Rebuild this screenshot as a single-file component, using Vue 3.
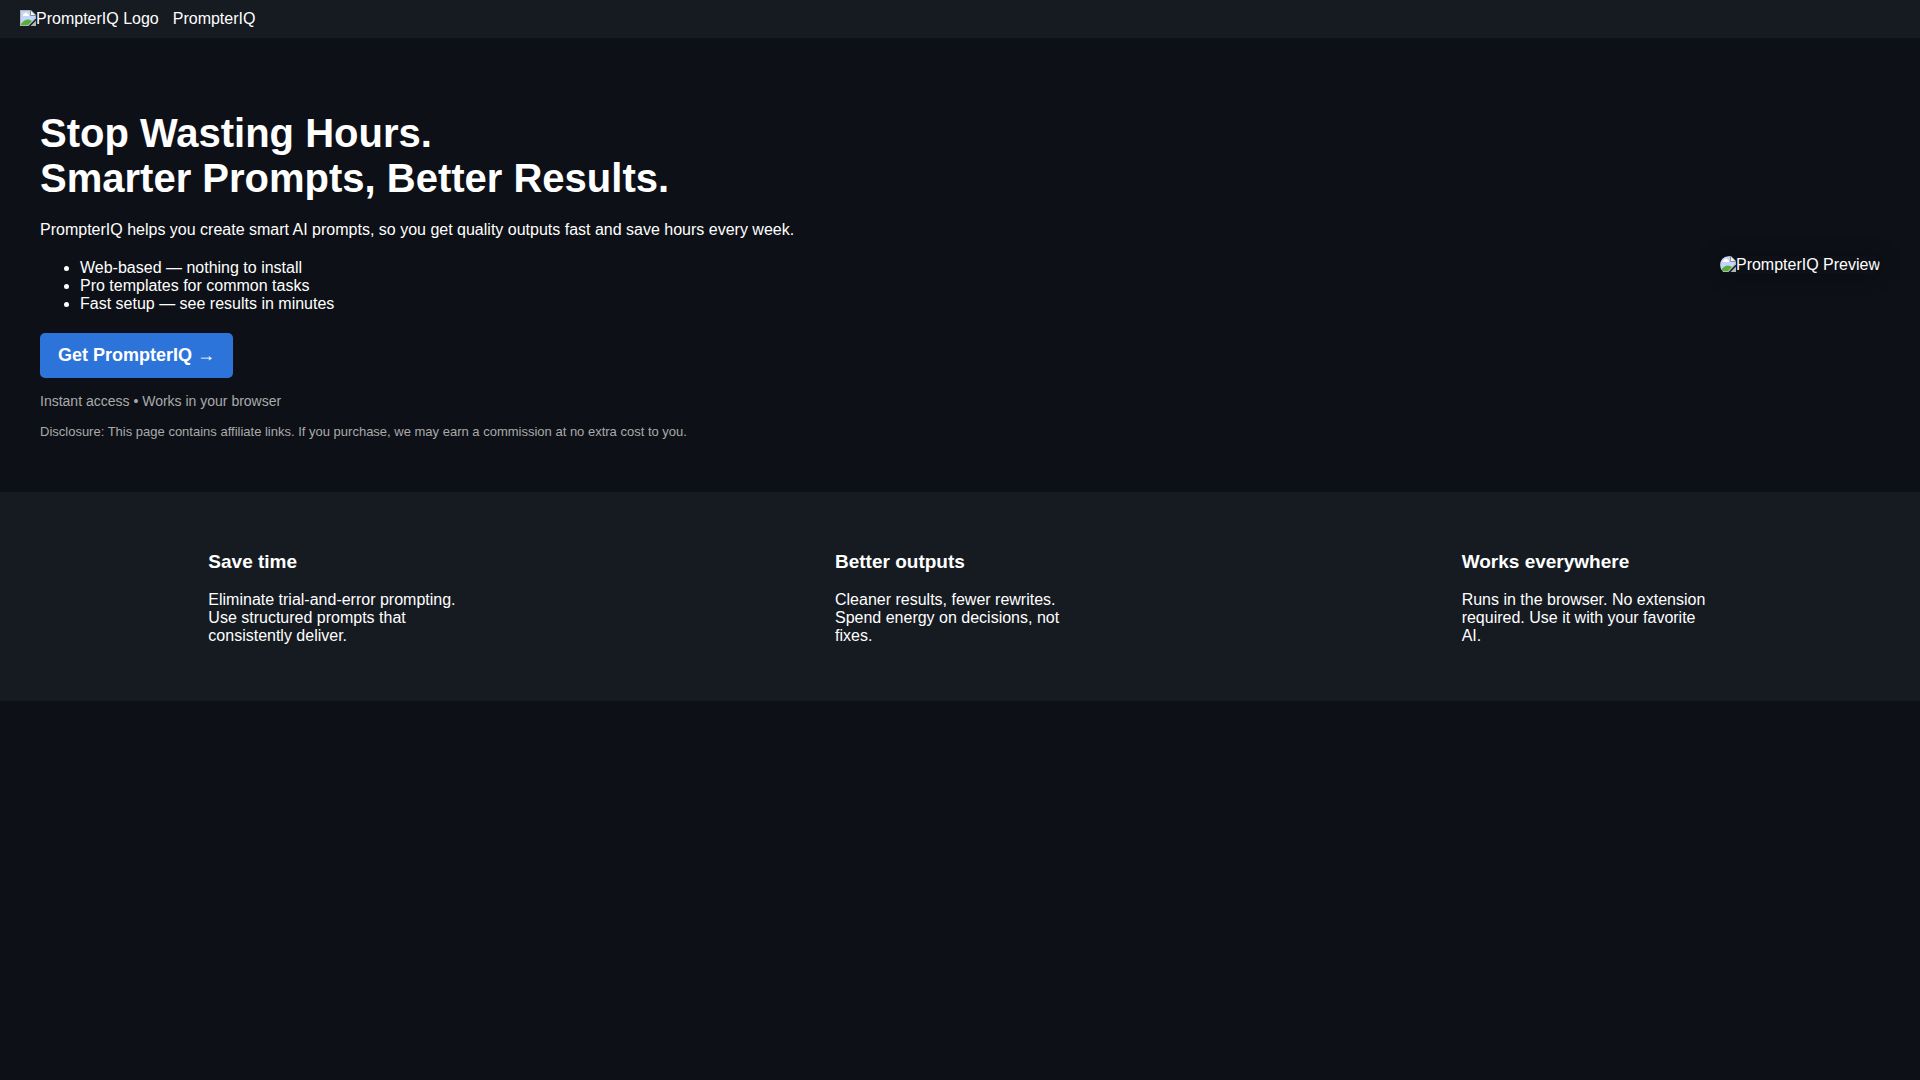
<script setup>
const points = [
  'Web-based — nothing to install',
  'Pro templates for common tasks',
  'Fast setup — see results in minutes',
]

const features = [
  {
    title: 'Save time',
    text: 'Eliminate trial-and-error prompting. Use structured prompts that consistently deliver.',
  },
  {
    title: 'Better outputs',
    text: 'Cleaner results, fewer rewrites. Spend energy on decisions, not fixes.',
  },
  {
    title: 'Works everywhere',
    text: 'Runs in the browser. No extension required. Use it with your favorite AI.',
  },
]
</script>

<template>
  <div class="page">
    <header class="topbar">
      <span class="picture">
        <svg class="picture-icon" viewBox="0 0 16 16" aria-hidden="true">
          <symbol id="torn-picture" viewBox="0 0 16 16">
            <path fill="#b4b4b4" d="M0 0h11l5 5v3.500L8.500 16H0z" />
            <path fill="#c3d5fa" d="M1 1h9.500v4.500H15V8L8 15H1z" />
            <path fill="#fff" d="M3 6V5q0-1 1.200-1Q4.500 2.500 6 2.500T7.800 4Q9 4 9 6z" />
            <path fill="#56ae37" d="M1 15v-1Q4 9.500 8 9.500q2.500 0 4 1.500L8 15z" />
            <path fill="#f4f4f4" d="M11 1l4 4h-4z" />
            <path fill="none" stroke="#8c8c8c" d="M10.500 0v5.500H16" />
            <path fill="#b4b4b4" d="M16 10.500V16h-5.500z" />
            <path fill="#a5cf9a" d="M15 13v2h-2z" />
          </symbol>
          <use href="#torn-picture" />
        </svg>
        <span>PrompterIQ Logo</span>
      </span>
      <span>PrompterIQ</span>
    </header>

    <main>
      <section class="hero">
        <div class="hero-text">
          <h1>Stop Wasting Hours.<br />Smarter Prompts, Better Results.</h1>
          <p>PrompterIQ helps you create smart AI prompts, so you get quality outputs fast and save hours every week.</p>
          <ul>
            <li v-for="point in points" :key="point">{{ point }}</li>
          </ul>
          <a class="cta" href="#">Get PrompterIQ →</a>
          <p class="note">Instant access • Works in your browser</p>
          <p class="disclosure">Disclosure: This page contains affiliate links. If you purchase, we may earn a commission at no extra cost to you.</p>
        </div>
        <span class="picture preview">
          <svg class="picture-icon" aria-hidden="true"><use href="#torn-picture" /></svg>
          <span>PrompterIQ Preview</span>
        </span>
      </section>

      <section class="features">
        <article v-for="feature in features" :key="feature.title" class="feature">
          <h3>{{ feature.title }}</h3>
          <p>{{ feature.text }}</p>
        </article>
      </section>
    </main>
  </div>
</template>

<style>
body {
  margin: 0;
  background: #0d1117;
}
</style>

<style scoped>
.page {
  color: #fff;
  font-family: "Liberation Sans", Arial, sans-serif;
  font-size: 16px;
  line-height: 18px;
}

.topbar {
  display: flex;
  align-items: center;
  gap: 14px;
  padding: 10px 20px;
  background: #161b22;
}

.picture {
  display: flex;
  align-items: flex-start;
  white-space: nowrap;
}

.picture-icon {
  width: 16px;
  height: 16px;
  flex: none;
}

.hero {
  display: flex;
  align-items: center;
  justify-content: space-between;
  gap: 40px;
  padding: 40px;
}

h1 {
  margin: 33px 0 20px;
  font-size: 40px;
  line-height: 45px;
}

p {
  margin: 0;
}

ul {
  margin: 20px 0;
  padding-left: 40px;
}

.cta {
  display: inline-block;
  padding: 12px 18px;
  border-radius: 5px;
  background: #2d74da;
  color: #fff;
  font-size: 18px;
  font-weight: bold;
  line-height: 21px;
  text-decoration: none;
}

.note {
  margin: 14px 0;
  color: #aaa;
  font-size: 14px;
}

.disclosure {
  margin: 14px 0 13px;
  color: #aaa;
  font-size: 13px;
  line-height: 15px;
}

.preview {
  border-radius: 10px;
  overflow: hidden;
  box-shadow: 0 0 20px rgba(0, 0, 0, 0.4);
}

.features {
  display: flex;
  justify-content: space-around;
  padding: 40px 20px;
  background: #161b22;
}

.feature {
  width: 250px;
}

h3 {
  margin: 19px 0;
  font-size: 19px;
  line-height: 21px;
}

.feature p {
  margin: 16px 0;
}
</style>
